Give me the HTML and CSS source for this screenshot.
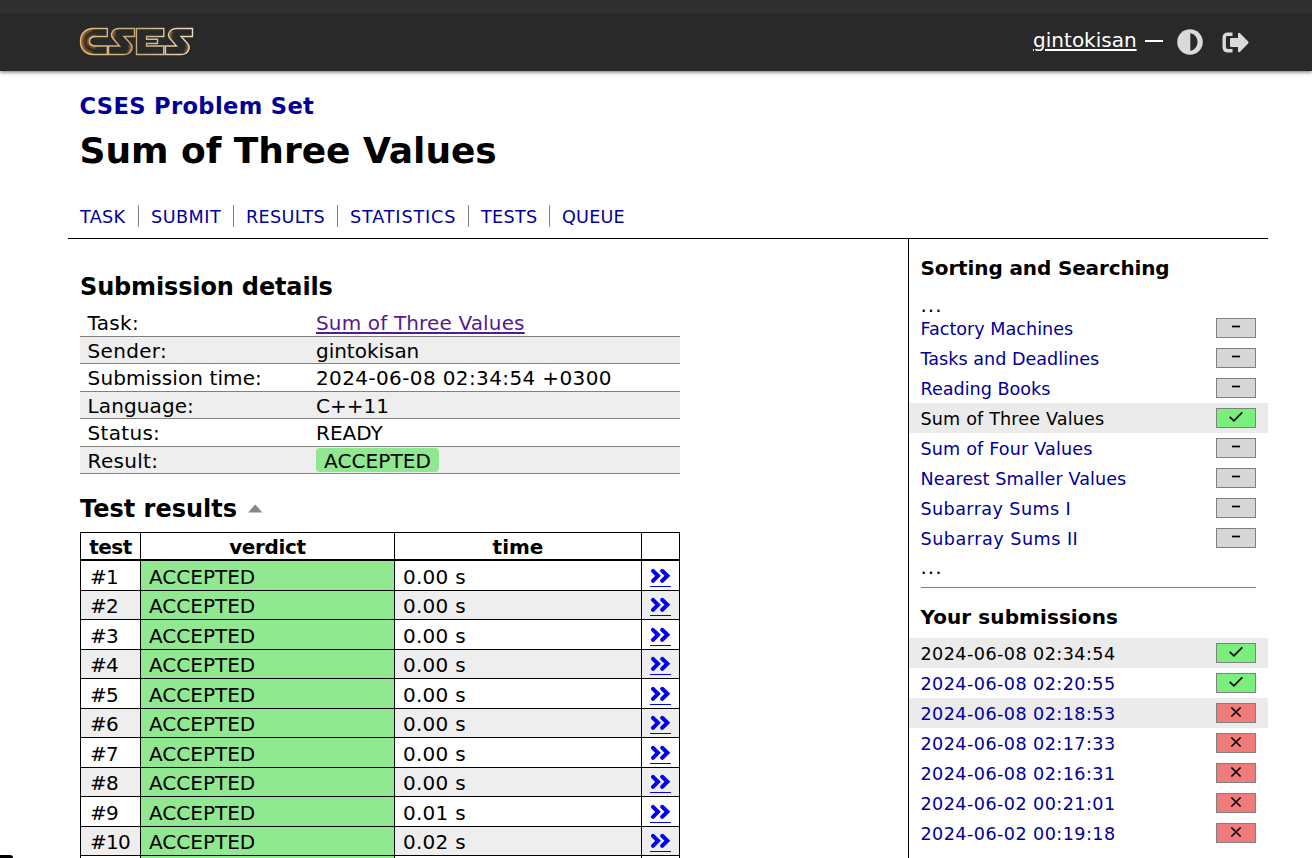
FILE: index.html
```
<!DOCTYPE html>
<html lang="en">
<head>
<meta charset="utf-8">
<title>CSES - Sum of Three Values</title>
<link rel="stylesheet" href="styles.css">
</head>
<body>
<svg class="defs" width="0" height="0" aria-hidden="true">
  <symbol id="next" viewBox="0 0 21 15"><path d="M3 2.800 8 7.800 3 12.800M12.200 2.800 17.400 7.800 12.200 12.800" fill="none" stroke="#00e" stroke-width="4" stroke-linecap="round"/></symbol>
  <symbol id="dash" viewBox="0 0 14 14"><path d="M3 6.500h8" stroke="#000" stroke-width="1.700"/></symbol>
  <symbol id="check" viewBox="0 0 14 14"><path d="M.7 6.800 4.900 10.800 13.300 2.300" fill="none" stroke="#000" stroke-width="1.700"/></symbol>
  <symbol id="cross" viewBox="0 0 14 14"><path d="M2.400 2.500 11.600 11.500M11.600 2.500 2.400 11.500" stroke="#000" stroke-width="1.700"/></symbol>
</svg>

<header class="header">
  <svg class="logo" width="116" height="30" viewBox="79 27 116 30">
    <defs>
      <linearGradient id="gold" x1="0" x2="1"><stop offset="0" stop-color="#e8c27c"/><stop offset=".5" stop-color="#c4ab7a"/><stop offset="1" stop-color="#eedcc0"/></linearGradient>
      <clipPath id="inside"><use href="#letters"/></clipPath>
      <filter id="soft"><feGaussianBlur stdDeviation="1"/></filter>
      <path id="letters" d="M107.300 28.500H93.500C85 28.500 80.500 34 80.500 41.500S85 54.500 93.500 54.500H107.300V46H96.500C91.500 46 89.500 44 89.500 41.200S91.500 36.500 96.500 36.500H107.300Z
        M134.500 28.500H119.500C112 28.500 109.800 34.500 113 38.500L119.500 46H108.500V54.500H124C131.500 54.500 133.800 47.500 130.500 43.500L123.800 36.500H134.500Z
        M136.500 28.500H163.800V36.500H146.500V39.200H157.500V43.500H146.500V46H163.800V54.500H136.500Z
        M192.500 28.500H177C169.500 28.500 166.500 34.500 170 38.500L176.500 46H165.500V54.500H181C188.500 54.500 191 47.500 187.500 43.500L181 36.500H192.500Z"/>
    </defs>
    <g clip-path="url(#inside)" fill="none" stroke="#a06a30" stroke-width="3" filter="url(#soft)">
      <path d="M92 29.500C85 30.500 82 35 82 41.500S85 52.500 92 53.500M96 36C90 37 88.500 39 88.500 41.500S90 46 96 47M115 31C111.500 34 112 37 114 39M130 44C132.500 48 131 51 128 53M172 31C168.500 34 169 37 171 39M187 44C189.500 48 188 51 185 53"/>
    </g>
    <use href="#letters" fill="none" stroke="url(#gold)" stroke-width="1.400"/>
  </svg>
  <div class="controls">
    <a class="account">gintokisan</a>
    <span class="rule"></span>
    <svg class="theme" width="26" height="26" viewBox="0 0 26 26"><circle cx="13" cy="13" r="12.800" fill="#dadada"/><path d="M13.300 4a9.200 9.200 0 0 1 0 18z" fill="#292929"/></svg>
    <svg class="logout" width="28" height="22" viewBox="0 0 28 22"><path d="M10.500 2.200H6Q2.200 2.200 2.200 6V15Q2.200 18.800 6 18.800H10.500" fill="none" stroke="#dadada" stroke-width="3.400"/><path d="M8 7.300Q8 6 9.300 6H16V1.600Q16.500.3 17.800 1L26.200 9.500Q27 10.500 26.200 11.500L17.800 20Q16.500 20.700 16 19.400V15H9.300Q8 15 8 13.700Z" fill="#dadada"/></svg>
  </div>
</header>

<main class="page">
  <div class="title-block">
    <a class="crumb">CSES Problem Set</a>
    <h1 class="title">Sum of Three Values</h1>
    <nav class="nav">
      <a class="n-task">TASK</a><a class="n-submit">SUBMIT</a><a class="n-results">RESULTS</a><a class="n-stats">STATISTICS</a><a class="n-tests">TESTS</a><a class="n-queue">QUEUE</a>
    </nav>
  </div>
  <div class="columns">
    <section class="content">
      <h2 class="h-details">Submission details</h2>
      <div class="details">
        <div><b class="wide">Task:</b><a class="tasklink">Sum of Three Values</a></div>
        <div><b class="wide">Sender:</b><span class="sender">gintokisan</span></div>
        <div><b class="mid">Submission time:</b><span class="when">2024-06-08 02:34:54 +0300</span></div>
        <div><b class="mid">Language:</b><span>C++11</span></div>
        <div><b class="wide">Status:</b><span>READY</span></div>
        <div><b class="wide">Result:</b><span class="verdict-tag">ACCEPTED</span></div>
      </div>
      <h2 class="h-tests">Test results <svg width="15" height="9" viewBox="0 0 15 9"><path d="M.3 8.500Q4 3.800 7.200.5 10.600 3.800 14.300 8.500Z" fill="#888"/></svg></h2>
      <div class="tests" id="tests">
        <div class="row head"><span class="h1c">test</span><span class="h2c">verdict</span><span>time</span><span></span></div>
        <div class="row"><span class="num">#1</span><span class="ok">ACCEPTED</span><span class="time">0.00 s</span><a><svg><use href="#next"/></svg></a></div>
        <div class="row"><span class="num">#2</span><span class="ok">ACCEPTED</span><span class="time">0.00 s</span><a><svg><use href="#next"/></svg></a></div>
        <div class="row"><span class="num">#3</span><span class="ok">ACCEPTED</span><span class="time">0.00 s</span><a><svg><use href="#next"/></svg></a></div>
        <div class="row"><span class="num">#4</span><span class="ok">ACCEPTED</span><span class="time">0.00 s</span><a><svg><use href="#next"/></svg></a></div>
        <div class="row"><span class="num">#5</span><span class="ok">ACCEPTED</span><span class="time">0.00 s</span><a><svg><use href="#next"/></svg></a></div>
        <div class="row"><span class="num">#6</span><span class="ok">ACCEPTED</span><span class="time">0.00 s</span><a><svg><use href="#next"/></svg></a></div>
        <div class="row"><span class="num">#7</span><span class="ok">ACCEPTED</span><span class="time">0.00 s</span><a><svg><use href="#next"/></svg></a></div>
        <div class="row"><span class="num">#8</span><span class="ok">ACCEPTED</span><span class="time">0.00 s</span><a><svg><use href="#next"/></svg></a></div>
        <div class="row"><span class="num">#9</span><span class="ok">ACCEPTED</span><span class="time">0.01 s</span><a><svg><use href="#next"/></svg></a></div>
        <div class="row"><span class="num">#10</span><span class="ok">ACCEPTED</span><span class="time">0.02 s</span><a><svg><use href="#next"/></svg></a></div>
        <div class="row"><span></span><span class="ok"></span><span></span><a></a></div>
      </div>
    </section>
    <aside class="side">
      <h3 class="h-sort">Sorting and Searching</h3>
      <div class="dots">...</div>
      <div class="list tasks">
        <div><a>Factory Machines</a><i><svg><use href="#dash"/></svg></i></div>
        <div><a>Tasks and Deadlines</a><i><svg><use href="#dash"/></svg></i></div>
        <div><a>Reading Books</a><i><svg><use href="#dash"/></svg></i></div>
        <div class="current"><a class="ls2">Sum of Three Values</a><i class="full"><svg><use href="#check"/></svg></i></div>
        <div><a class="ls2">Sum of Four Values</a><i><svg><use href="#dash"/></svg></i></div>
        <div><a class="ls1">Nearest Smaller Values</a><i><svg><use href="#dash"/></svg></i></div>
        <div><a class="ls5">Subarray Sums I</a><i><svg><use href="#dash"/></svg></i></div>
        <div><a class="ls6">Subarray Sums II</a><i><svg><use href="#dash"/></svg></i></div>
      </div>
      <div class="dots last">...</div>
      <hr class="divider">
      <h3 class="h-subs">Your submissions</h3>
      <div class="list subs">
        <div class="current"><a>2024-06-08 02:34:54</a><i class="full"><svg><use href="#check"/></svg></i></div>
        <div><a>2024-06-08 02:20:55</a><i class="full"><svg><use href="#check"/></svg></i></div>
        <div class="shade"><a>2024-06-08 02:18:53</a><i class="zero"><svg><use href="#cross"/></svg></i></div>
        <div><a>2024-06-08 02:17:33</a><i class="zero"><svg><use href="#cross"/></svg></i></div>
        <div><a>2024-06-08 02:16:31</a><i class="zero"><svg><use href="#cross"/></svg></i></div>
        <div><a>2024-06-02 00:21:01</a><i class="zero"><svg><use href="#cross"/></svg></i></div>
        <div><a>2024-06-02 00:19:18</a><i class="zero"><svg><use href="#cross"/></svg></i></div>
      </div>
    </aside>
  </div>
</main>
<div class="status-corner"></div>
</body>
</html>
```
FILE: styles.css
```
* { box-sizing: border-box; }
body {
  margin: 0;
  height: 858px;
  overflow: hidden;
  background: #fff;
  color: #000;
  font: 20px/24px "DejaVu Sans", Verdana, sans-serif;
}
h1, h2, h3 { margin: 0; font-weight: bold; white-space: nowrap; }
.defs { position: absolute; }

.header {
  height: 71px;
  padding: 13px 62px 0 79px;
  display: flex;
  justify-content: space-between;
  background: linear-gradient(#2f2f2f 13px, #292929 13px);
  box-shadow: 0 1px 4px rgba(0, 0, 0, .6);
}
.logo { margin-top: 14px; }
.controls { display: flex; color: #fff; }
.account {
  height: 24px;
  margin-top: 15px;
  text-decoration: underline;
  text-decoration-thickness: 2px;
  text-underline-offset: 2px;
}
.rule { width: 18px; height: 2px; margin: 27px 14.4px 0 8px; background: #fff; }
.theme { margin-top: 16px; }
.logout { margin: 19px 0 0 19px; }

.page { width: 1200px; margin-left: 68px; }
.title-block { height: 168px; padding: 22px 12px 0 11.5px; border-bottom: 1px solid #000; }
.crumb {
  display: block;
  font-size: 22.6px;
  font-weight: bold;
  line-height: 26px;
  letter-spacing: .35px;
  color: #009;
}
.title { margin-top: 9px; font-size: 36px; line-height: 46px; letter-spacing: -.03px; }
.nav { display: flex; height: 22px; margin: 31px 0 0 .5px; font-size: 17.6px; line-height: 25px; color: #009; }
.nav a { height: 22px; margin-right: 12px; border-right: 1px solid #808080; white-space: nowrap; }
.nav a:last-child { border: 0; }
.n-task { width: 59px; letter-spacing: .3px; }
.n-submit { width: 83px; letter-spacing: .5px; }
.n-results { width: 92px; letter-spacing: .35px; }
.n-stats { width: 119px; letter-spacing: .85px; }
.n-tests { width: 69px; letter-spacing: .3px; }
.n-queue { width: 70px; letter-spacing: .2px; }

.columns { display: flex; height: 619px; }
.content { width: 840px; padding: 32px 12px 0; }
h2 { font-size: 24px; line-height: 30px; }
.h-details { line-height: 32px; letter-spacing: -.15px; }
.h-tests { margin-top: 20px; }
.h-tests svg { margin-left: 3px; vertical-align: 4px; }

.details { width: 600px; margin-top: 6px; }
.details > div { display: flex; height: 28px; padding-left: 7.6px; border-bottom: 1px solid #808080; line-height: 28px; white-space: nowrap; }
.details > div:nth-child(even) { height: 27px; background: #eee; }
.details b { width: 228.4px; font-weight: normal; }
.wide { letter-spacing: .3px; }
.mid { letter-spacing: .1px; }
.tasklink { color: #551a8b; letter-spacing: .15px; text-decoration: underline; text-decoration-thickness: 2px; text-underline-offset: 2px; }
.sender { letter-spacing: -.02px; }
.when { letter-spacing: .38px; }
.verdict-tag { height: 24px; margin-top: 1px; padding: 0 8px; line-height: 26px; letter-spacing: .1px; border-radius: 4px; background: #90e890; }

.tests { width: 600px; margin-top: 8px; border: 1px solid #000; border-bottom: 0; }
.row { display: grid; grid-template-columns: 60px 254px 247px 37px; grid-template-rows: 100%; height: 30px; line-height: 32px; }
.row:nth-child(odd) { height: 29px; line-height: 30px; background: #eee; }
.row > * { border-right: 1px solid #000; border-bottom: 1px solid #000; padding-left: 8px; white-space: nowrap; }
.row > :last-child { border-right: 0; }
.row.head { height: 28px; background: #fff; font-weight: bold; line-height: 28px; text-align: center; }
.head > *, .row.head > :last-child { padding: 0; border-bottom-width: 2px; }
.row .num { padding-left: 9px; letter-spacing: -.8px; }
.row.head .h1c { letter-spacing: -.5px; padding: 0; }
.row.head .h2c { letter-spacing: -.35px; padding: 0; }
.ok { background: #90e890; }
.time { letter-spacing: .25px; }
.row a { display: block; padding: 7px 8px 0; }
.row:nth-child(odd) a { padding-top: 6px; }
.row a svg { display: block; width: 21px; height: 19px; padding-bottom: 3px; border-bottom: 1px solid #00e; }

.side { width: 360px; padding-top: 16px; border-left: 1px solid #000; }
h3 { padding-left: 11.5px; font-size: 20px; line-height: 26px; }
.h-sort { letter-spacing: -.13px; }
.h-subs { margin-top: 16px; letter-spacing: .08px; }
.dots { height: 20px; margin-top: 12px; padding-left: 11.5px; letter-spacing: 1px; }
.dots.last { height: 26px; margin-top: 2px; }
.list > div {
  display: flex;
  align-items: center;
  justify-content: space-between;
  height: 30px;
  padding: 0 12px 0 11.5px;
  font-size: 17.6px;
  line-height: 24px;
  color: #009;
}
.list .current { color: #000; background: #ebebeb; }
.list .shade { background: #ebebeb; }
.list a { padding-top: 2px; }
.list i { display: flex; justify-content: center; width: 40px; height: 20px; border: 1px solid #808080; background: #d6d6d6; }
.list i svg { width: 14px; height: 14px; margin-top: 1px; }
.list .full { background: #7bef7b; }
.list .zero { background: #f07b7b; }
.ls1 { letter-spacing: .08px; }
.ls2 { letter-spacing: .15px; }
.ls5 { letter-spacing: .4px; }
.ls6 { letter-spacing: .5px; }
.subs { margin-top: 8px; }
.subs a { letter-spacing: .43px; }
.divider { height: 1px; margin: 6px 12px 0; border: 0; background: #808080; }
.status-corner { position: absolute; left: 0; top: 855px; width: 13px; height: 3px; background: #000; border-top-right-radius: 3px; }
```
